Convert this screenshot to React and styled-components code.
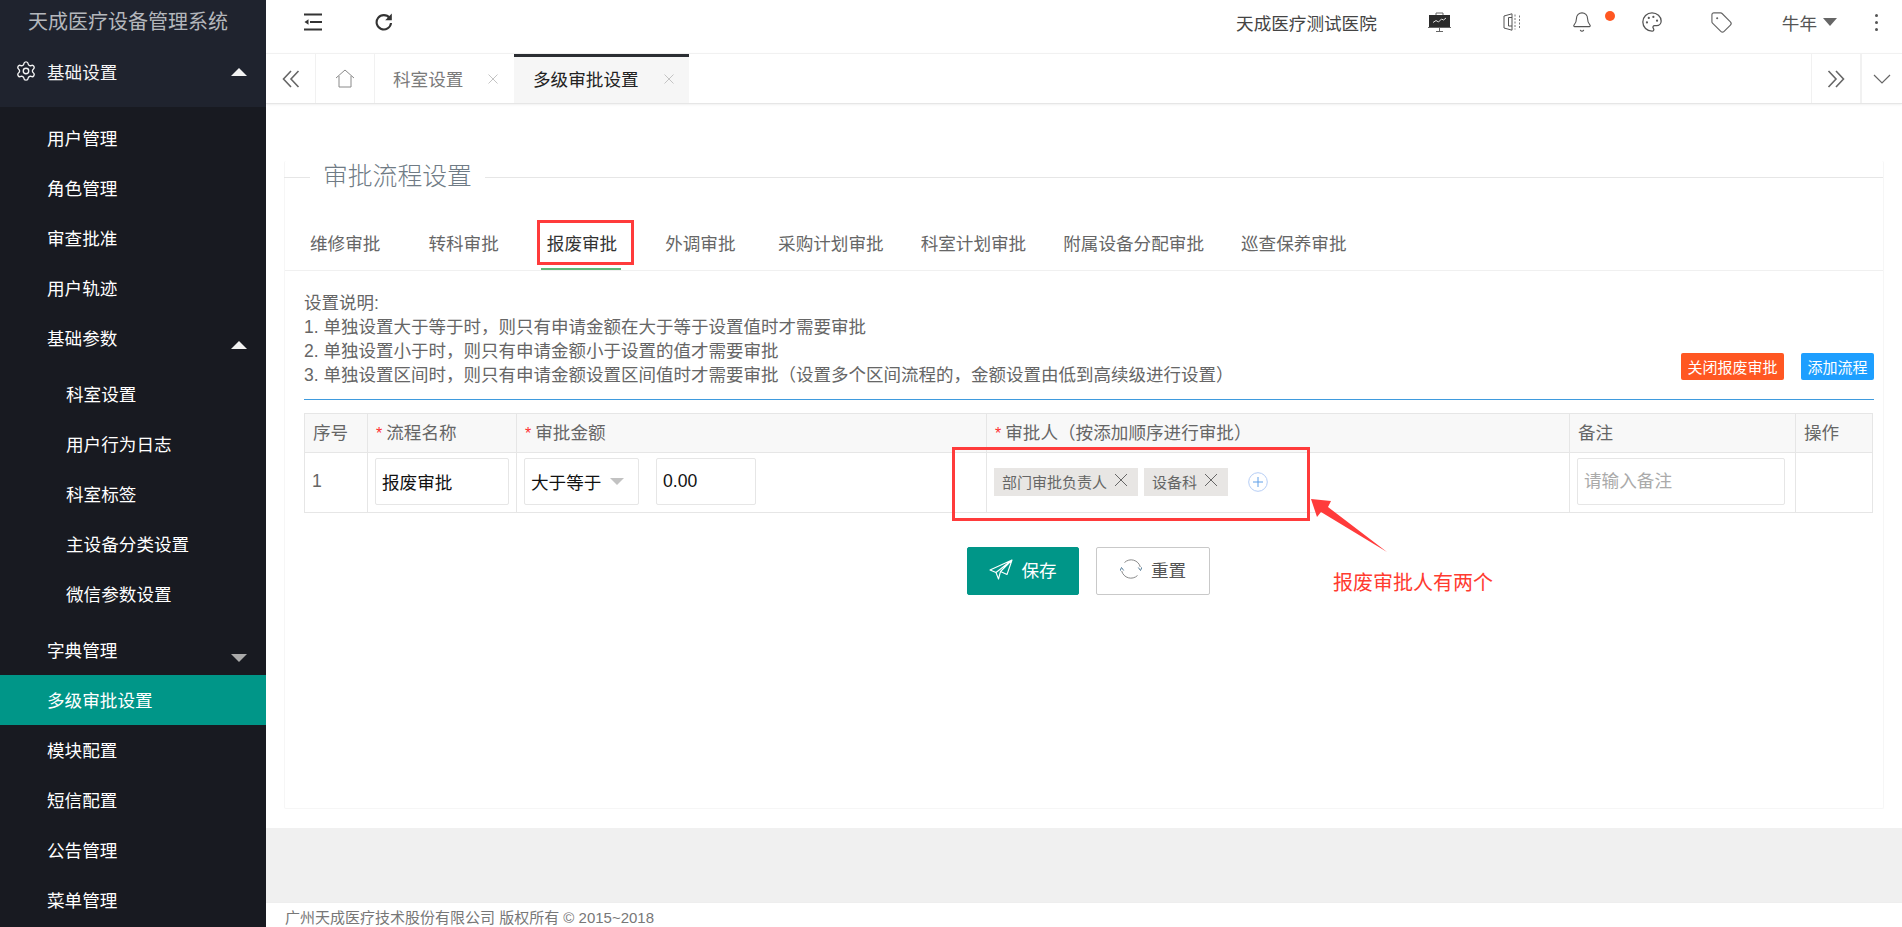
import React from "react";
import styled, { createGlobalStyle } from "styled-components";
import { Settings, Bell, Palette, Tag } from "lucide-react";

const GlobalStyle = createGlobalStyle`
  html, body {
    margin: 0;
    padding: 0;
    height: 927px;
    overflow: hidden;
    background: #fff;
  }
  * {
    box-sizing: border-box;
  }
  body, input, button, table {
    font-family: "Liberation Sans", "Noto Sans CJK SC", sans-serif;
    font-size: 17.6px;
  }
`;

const Layout = styled.div`
  display: flex;
  width: 1902px;
  height: 927px;
  overflow: hidden;
  position: relative;
`;

/* sidebar */
const Sidebar = styled.aside`
  width: 266px;
  flex: none;
  background: #181a21;
  color: #fff;
  overflow: hidden;
`;

const Brand = styled.div`
  height: 53px;
  padding: 7px 0 0 28px;
  background: #1f232e;
  color: #b4b7bc;
  font-size: 20px;
  line-height: 30px;
  white-space: nowrap;
`;

const GroupHead = styled.div`
  height: 54px;
  padding: 0 19px 18px 15px;
  display: flex;
  align-items: center;
  background: #1f232e;
  color: #f4f4f4;

  svg {
    margin-right: 10px;
  }
`;

const Caret = styled.span`
  margin-left: auto;
  width: 0;
  height: 0;
  border-left: 8px solid transparent;
  border-right: 8px solid transparent;
  border-bottom: ${p => (p.$down ? "none" : "8px solid #f2f2f2")};
  border-top: ${p => (p.$down ? "8px solid #aaa" : "none")};
  margin-top: ${p => p.$top || 0}px;
`;

const Menu = styled.nav`
  padding-top: 6px;
`;

const MenuItem = styled.div`
  height: 50px;
  line-height: 50px;
  padding: 2px 19px 0 ${p => (p.$sub ? 66 : 47)}px;
  display: flex;
  align-items: center;
  white-space: nowrap;
  color: #fff;
  background: ${p => (p.$active ? "#009688" : "transparent")};
`;

const SubMenu = styled.div`
  padding: 6px 0;
`;

/* top bar */
const Main = styled.main`
  flex: 1;
  min-width: 0;
  display: flex;
  flex-direction: column;
`;

const Topbar = styled.header`
  height: 53px;
  flex: none;
  display: flex;
  align-items: center;
  padding: 0 24px 9px 38px;
  background: #fff;
  color: #333;
`;

const IconSlot = styled.span`
  display: block;
  flex: none;
  margin-right: ${p => p.$mr || 0}px;
  line-height: 0;
`;

const HospitalName = styled.span`
  margin-left: auto;
  margin-right: 51px;
  color: #444;
  white-space: nowrap;
`;

const BellSlot = styled(IconSlot)`
  position: relative;

  &::after {
    content: "";
    position: absolute;
    top: 0;
    left: 34px;
    width: 10px;
    height: 10px;
    border-radius: 50%;
    background: #ff5722;
  }
`;

const UserName = styled.span`
  color: #555;
`;

const UserCaret = styled.span`
  width: 0;
  height: 0;
  margin: 0 0 0 6px;
  border-left: 7.5px solid transparent;
  border-right: 7.5px solid transparent;
  border-top: 8px solid #666;
`;

const MoreDots = styled.span`
  display: flex;
  flex-direction: column;
  gap: 4px;
  margin-left: 38px;

  i {
    display: block;
    width: 3px;
    height: 3px;
    border-radius: 50%;
    background: #555;
  }
`;

/* page tabs */
const TabBar = styled.div`
  height: 51px;
  flex: none;
  display: flex;
  border-top: 1px solid #f1f1f1;
  border-bottom: 1px solid #e6e6e6;
  box-shadow: 0 1px 2px rgba(0, 0, 0, 0.06);
  background: #fff;
  position: relative;
  z-index: 1;
`;

const TabButton = styled.div`
  width: ${p => p.$w}px;
  flex: none;
  display: flex;
  align-items: center;
  justify-content: center;
  border-right: ${p => (p.$noRight ? "none" : "1px solid #f1f1f1")};
  border-left: ${p => (p.$left ? "1px solid #f1f1f1" : "none")};
  margin-left: ${p => (p.$auto ? "auto" : 0)};
  color: #777;
`;

const PageTab = styled.div`
  width: ${p => p.$w}px;
  flex: none;
  display: flex;
  align-items: center;
  padding-left: ${p => p.$pl}px;
  padding-bottom: ${p => (p.$active ? 3 : 0)}px;
  background: ${p => (p.$active ? "#f6f6f6" : "#fff")};
  color: ${p => (p.$active ? "#222" : "#7b7b7b")};
  border-top: ${p => (p.$active ? "3px solid #2b2e33" : "none")};
  white-space: nowrap;

  svg {
    margin-left: 25px;
  }
`;

/* content */
const Content = styled.section`
  flex: 1;
  padding: 57px 18px 19px;
  background: #fff;
  min-height: 0;
`;

const Card = styled.div`
  height: 100%;
  border: 1px solid #f6f6f6;
  border-top: none;
  border-radius: 2px;
`;

const Legend = styled.div`
  height: 32px;
  display: flex;
  align-items: center;
  margin-left: -1px;

  &::before,
  &::after {
    content: "";
    height: 1px;
    background: #e6e6e6;
  }
  &::before {
    width: 26px;
  }
  &::after {
    flex: 1;
  }
`;

const LegendText = styled.h2`
  margin: 0;
  padding: 0 13px;
  font-size: 24.8px;
  font-weight: 300;
  line-height: 32px;
  color: #6f7b85;
`;

const Tabs = styled.div`
  display: flex;
  height: 52px;
  margin-top: 26px;
  padding-left: 1px;
  border-bottom: 1px solid #f0f0f0;
`;

const TabItem = styled.div`
  min-width: 118.4px;
  height: 51px;
  padding: 0 18.5px 5px;
  display: flex;
  align-items: center;
  justify-content: center;
  flex: none;
  white-space: nowrap;
  color: ${p => (p.$active ? "#333" : "#666")};
  position: relative;

  ${p =>
    p.$active &&
    `&::after {
      content: "";
      position: absolute;
      left: 18px;
      right: 20px;
      bottom: 0;
      height: 2px;
      background: #5fb878;
    }`}
`;

const Panel = styled.div`
  padding: 20px 9px 0 19px;
`;

const NoteRow = styled.div`
  display: flex;
  justify-content: space-between;
  align-items: flex-end;
  padding-bottom: 12px;
  border-bottom: 1px solid #3f9bde;
`;

const Note = styled.div`
  font-size: 17.5px;
  line-height: 24px;
  color: #666;
  white-space: nowrap;
`;

const NoteActions = styled.div`
  display: flex;
  gap: 17px;
  margin-bottom: 7px;
`;

const SmallBtn = styled.button`
  height: 27px;
  width: ${p => p.$w}px;
  padding: 0;
  border: none;
  border-radius: 2px;
  background: ${p => p.$bg};
  color: #fff;
  font-size: 15px;
  white-space: nowrap;
`;

const Table = styled.table`
  width: 1568px;
  margin-top: 13px;
  border-collapse: collapse;
  table-layout: fixed;
  color: #666;

  th,
  td {
    border: 1px solid #e6e6e6;
    text-align: left;
    font-weight: 400;
    white-space: nowrap;
  }
  th {
    height: 39px;
    padding: 0 8px 4px;
    background: #f8f8f8;
  }
  td {
    height: 60px;
    padding: 0 7px 2px;
  }
`;

const Required = styled.span`
  color: #ff3030;
  margin-right: 4px;
  font-size: 16px;
`;

const CellRow = styled.div`
  display: flex;
  align-items: center;
`;

const TextBox = styled.input`
  width: ${p => p.$w}px;
  height: 47px;
  padding: 0 6px;
  border: 1px solid #e6e6e6;
  border-radius: 2px;
  background: #fff;
  color: #111;
  font-size: 17.6px;
  outline: none;
  margin-right: ${p => p.$mr || 0}px;

  &::placeholder {
    color: #aaa;
  }
`;

const SelectBox = styled.div`
  width: 115px;
  height: 47px;
  margin-right: 17px;
  padding: 0 6px;
  display: flex;
  align-items: center;
  border: 1px solid #e6e6e6;
  border-radius: 2px;
  color: #111;

  &::after {
    content: "";
    margin-left: 9px;
    border-left: 7px solid transparent;
    border-right: 7px solid transparent;
    border-top: 7px solid #c2c2c2;
  }
`;

const Chip = styled.span`
  height: 28px;
  display: inline-flex;
  align-items: center;
  margin-right: 6px;
  padding: 0 10px 0 8px;
  background: #e8e6e4;
  color: #666;
  font-size: 15px;

  svg {
    margin: -3px 0 0 7px;
  }
`;

const AddSlot = styled.span`
  display: block;
  height: 20px;
  margin-left: 14px;
`;

const FormActions = styled.div`
  display: flex;
  justify-content: center;
  gap: 17px;
  margin: 34px 0 0 -1px;
`;

const ActionBtn = styled.button`
  width: ${p => p.$w}px;
  height: 48px;
  padding: 0 0 4px;
  display: flex;
  align-items: center;
  justify-content: center;
  gap: ${p => (p.$primary ? 8 : 9)}px;
  border-radius: 2px;
  border: 1px solid ${p => (p.$primary ? "#009688" : "#c9c9c9")};
  background: ${p => (p.$primary ? "#009688" : "#fff")};
  color: ${p => (p.$primary ? "#fff" : "#555")};
  font-size: 17.6px;
`;

const GrayStrip = styled.div`
  height: 74px;
  flex: none;
  background: #f0f0f0;
`;

const Footer = styled.footer`
  height: 25px;
  flex: none;
  padding-left: 19px;
  line-height: 29px;
  font-size: 15px;
  color: #777;
  background: #fff;
  border-top: 1px solid #eee;
  white-space: nowrap;
`;

/* red marks drawn on top of the screenshot */
const MarkBox = styled.div`
  position: absolute;
  left: ${p => p.$x}px;
  top: ${p => p.$y}px;
  width: ${p => p.$w}px;
  height: ${p => p.$h}px;
  border: 3px solid #ff3b3b;
  pointer-events: none;
`;

const MarkText = styled.div`
  position: absolute;
  left: 1333px;
  top: 568px;
  font-size: 20px;
  line-height: 30px;
  color: #ff3b30;
`;

const MarkArrow = styled.svg`
  position: absolute;
  left: 1305px;
  top: 490px;
`;

const IndentIcon = () => (
  <svg width="18" height="18" viewBox="0 0 18 18">
    <path d="M0 1.5h18M6 9h12M0 16.5h18" stroke="#333" strokeWidth="2.2" fill="none" />
    <path d="M0.5 9L4.5 6.2v5.6z" fill="#333" />
  </svg>
);

const ReloadIcon = () => (
  <svg width="18" height="18" viewBox="0 0 18 18">
    <path d="M14.6 5A7.2 7.2 0 1 0 16 10" stroke="#333" strokeWidth="2.1" fill="none" />
    <path d="M16.8 0.6v6.6h-6.6z" fill="#333" />
  </svg>
);

const BoardIcon = () => (
  <svg width="23" height="20" viewBox="0 0 23 20">
    <path d="M8 3V1h7v2" stroke="#666" fill="none" />
    <rect x="1" y="3" width="21" height="12" fill="#2b2b2b" />
    <path d="M0 15.5h23M11.5 15.5V19.5M8 19.5h7" stroke="#666" fill="none" />
    <path d="M5 10.5l3-2 2.5 1.5 3-3 2 1 2.5-2" stroke="#ddd" fill="none" />
  </svg>
);

const BookIcon = () => (
  <svg width="18" height="18" viewBox="0 0 18 18">
    <path d="M1 3L9 .8v16.4L1 15zM9 4.5H5.5v8.5H9" stroke="#555" fill="none" />
    <path d="M12 1.5v15M16.5 2.5v13" stroke="#777" strokeDasharray="2 1.5" fill="none" />
  </svg>
);

const HomeIcon = () => (
  <svg width="20" height="19" viewBox="0 0 20 19">
    <path d="M1 9L10 1l9 8M4 7v11h12V7" stroke="#8a8a8a" fill="none" />
  </svg>
);

const DoubleChevron = ({ dir }) => (
  <svg width="18" height="18" viewBox="0 0 18 18">
    <path
      d={dir === "left" ? "M9 1L1.5 9 9 17M16.5 1L9 9l7.5 8" : "M1.5 1L9 9l-7.5 8M9 1l7.5 8-7.5 8"}
      stroke="#666"
      strokeWidth="1.6"
      fill="none"
    />
  </svg>
);

const DownChevron = () => (
  <svg width="18" height="10" viewBox="0 0 18 10">
    <path d="M1 1l8 8 8-8" stroke="#666" strokeWidth="1.2" fill="none" />
  </svg>
);

const TabCloseIcon = () => (
  <svg width="10" height="10" viewBox="0 0 10 10">
    <path d="M.5.5l9 9M9.5.5l-9 9" stroke="#c4c4c4" fill="none" />
  </svg>
);

const CrossIcon = () => (
  <svg width="14" height="14" viewBox="0 0 14 14">
    <path d="M1 1l12 12M13 1L1 13" stroke="#666" fill="none" />
  </svg>
);

const AddIcon = () => (
  <svg width="20" height="20" viewBox="0 0 20 20">
    <circle cx="10" cy="10" r="9.3" stroke="#b5cdf5" fill="none" />
    <path d="M5 10h10M10 5v10" stroke="#5f9fe8" fill="none" />
  </svg>
);

const PlaneIcon = () => (
  <svg width="24" height="21" viewBox="0 0 24 21">
    <path
      d="M1 11L23 1l-5 14.5-6.5-3L9.5 20 7 13.5zM7 13.5L23 1 11.5 12.5"
      stroke="#fff"
      strokeWidth="1.1"
      strokeLinejoin="round"
      fill="none"
    />
  </svg>
);

const ResetIcon = () => (
  <svg width="22" height="22" viewBox="0 0 22 22">
    <path d="M4.5 4.5A9.5 9.5 0 0 1 20.3 9" stroke="#8a8a8a" fill="none" />
    <path d="M17.5 17.5A9.5 9.5 0 0 1 1.7 13" stroke="#8a8a8a" fill="none" />
    <path d="M18.3 9.5l2.2 3 1.5-3.4" stroke="#5a7f9a" fill="none" />
    <path d="M3.7 12.5l-2.2-3L0 12.9" stroke="#5a7f9a" fill="none" />
  </svg>
);

const mainTabs = [
  { label: "维修审批" },
  { label: "转科审批" },
  { label: "报废审批", active: true },
  { label: "外调审批" },
  { label: "采购计划审批" },
  { label: "科室计划审批" },
  { label: "附属设备分配审批" },
  { label: "巡查保养审批" }
];

const App = () => {
  return (
    <Layout>
      <GlobalStyle />
      <Sidebar>
        <Brand>天成医疗设备管理系统</Brand>
        <GroupHead>
          <Settings size={22} strokeWidth={1.5} />
          基础设置
          <Caret $top={2} />
        </GroupHead>
        <Menu>
          <MenuItem>用户管理</MenuItem>
          <MenuItem>角色管理</MenuItem>
          <MenuItem>审查批准</MenuItem>
          <MenuItem>用户轨迹</MenuItem>
          <MenuItem>
            基础参数
            <Caret $top={12} />
          </MenuItem>
          <SubMenu>
            <MenuItem $sub>科室设置</MenuItem>
            <MenuItem $sub>用户行为日志</MenuItem>
            <MenuItem $sub>科室标签</MenuItem>
            <MenuItem $sub>主设备分类设置</MenuItem>
            <MenuItem $sub>微信参数设置</MenuItem>
          </SubMenu>
          <MenuItem>
            字典管理
            <Caret $down $top={14} />
          </MenuItem>
          <MenuItem $active>多级审批设置</MenuItem>
          <MenuItem>模块配置</MenuItem>
          <MenuItem>短信配置</MenuItem>
          <MenuItem>公告管理</MenuItem>
          <MenuItem>菜单管理</MenuItem>
        </Menu>
      </Sidebar>

      <Main>
        <Topbar>
          <IconSlot $mr={53}>
            <IndentIcon />
          </IconSlot>
          <IconSlot>
            <ReloadIcon />
          </IconSlot>
          <HospitalName>天成医疗测试医院</HospitalName>
          <IconSlot $mr={52}>
            <BoardIcon />
          </IconSlot>
          <IconSlot $mr={50}>
            <BookIcon />
          </IconSlot>
          <BellSlot $mr={48}>
            <Bell size={22} strokeWidth={1.2} color="#555" />
          </BellSlot>
          <IconSlot $mr={47}>
            <Palette size={22} strokeWidth={1.4} color="#555" />
          </IconSlot>
          <IconSlot $mr={49}>
            <Tag size={23} strokeWidth={1.2} color="#666" />
          </IconSlot>
          <UserName>牛年</UserName>
          <UserCaret />
          <MoreDots>
            <i />
            <i />
            <i />
          </MoreDots>
        </Topbar>

        <TabBar>
          <TabButton $w={50}>
            <DoubleChevron dir="left" />
          </TabButton>
          <TabButton $w={59}>
            <HomeIcon />
          </TabButton>
          <PageTab $w={139} $pl={18}>
            科室设置
            <TabCloseIcon />
          </PageTab>
          <PageTab $w={175} $pl={19} $active>
            多级审批设置
            <TabCloseIcon />
          </PageTab>
          <TabButton $w={50} $auto $left>
            <DoubleChevron dir="right" />
          </TabButton>
          <TabButton $w={41} $left $noRight>
            <DownChevron />
          </TabButton>
        </TabBar>

        <Content>
          <Card>
            <Legend>
              <LegendText>审批流程设置</LegendText>
            </Legend>
            <Tabs>
              {mainTabs.map(tab => (
                <TabItem key={tab.label} $active={tab.active}>
                  {tab.label}
                </TabItem>
              ))}
            </Tabs>
            <Panel>
              <NoteRow>
                <Note>
                  设置说明:
                  <br />
                  1. 单独设置大于等于时，则只有申请金额在大于等于设置值时才需要审批
                  <br />
                  2. 单独设置小于时，则只有申请金额小于设置的值才需要审批
                  <br />
                  3. 单独设置区间时，则只有申请金额设置区间值时才需要审批（设置多个区间流程的，金额设置由低到高续级进行设置）
                </Note>
                <NoteActions>
                  <SmallBtn $w={103} $bg="#ff5722">
                    关闭报废审批
                  </SmallBtn>
                  <SmallBtn $w={73} $bg="#1e9fff">
                    添加流程
                  </SmallBtn>
                </NoteActions>
              </NoteRow>

              <Table>
                <colgroup>
                  <col width="63" />
                  <col width="149" />
                  <col width="470" />
                  <col width="583" />
                  <col width="226" />
                  <col width="77" />
                </colgroup>
                <thead>
                  <tr>
                    <th>序号</th>
                    <th>
                      <Required>*</Required>流程名称
                    </th>
                    <th>
                      <Required>*</Required>审批金额
                    </th>
                    <th>
                      <Required>*</Required>审批人（按添加顺序进行审批）
                    </th>
                    <th>备注</th>
                    <th>操作</th>
                  </tr>
                </thead>
                <tbody>
                  <tr>
                    <td>1</td>
                    <td>
                      <TextBox $w={134} defaultValue="报废审批" />
                    </td>
                    <td>
                      <CellRow>
                        <SelectBox>大于等于</SelectBox>
                        <TextBox $w={100} defaultValue="0.00" />
                      </CellRow>
                    </td>
                    <td>
                      <CellRow>
                        <Chip>
                          部门审批负责人
                          <CrossIcon />
                        </Chip>
                        <Chip>
                          设备科
                          <CrossIcon />
                        </Chip>
                        <AddSlot>
                          <AddIcon />
                        </AddSlot>
                      </CellRow>
                    </td>
                    <td>
                      <TextBox $w={208} placeholder="请输入备注" />
                    </td>
                    <td />
                  </tr>
                </tbody>
              </Table>

              <FormActions>
                <ActionBtn $w={112} $primary>
                  <PlaneIcon />
                  保存
                </ActionBtn>
                <ActionBtn $w={114}>
                  <ResetIcon />
                  重置
                </ActionBtn>
              </FormActions>
            </Panel>
          </Card>
        </Content>

        <GrayStrip />
        <Footer>广州天成医疗技术股份有限公司 版权所有 © 2015~2018</Footer>
      </Main>

      <MarkBox $x={537} $y={220} $w={97} $h={45} />
      <MarkBox $x={952} $y={447} $w={358} $h={74} />
      <MarkArrow width="90" height="70" viewBox="0 0 90 70">
        <path d="M6 9L26 11 23 17 82 62 16 22 12 27z" fill="#ff3b3b" />
      </MarkArrow>
      <MarkText>报废审批人有两个</MarkText>
    </Layout>
  );
};

export default App;
